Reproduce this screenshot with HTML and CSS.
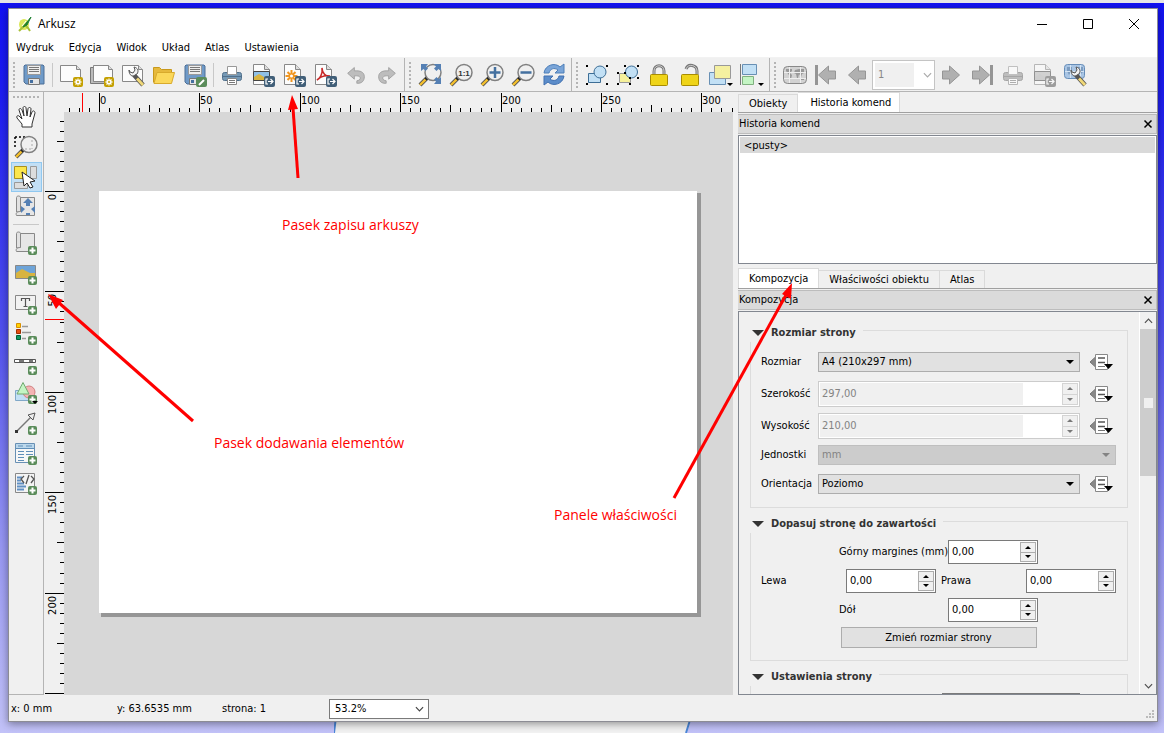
FILE: index.html
```html
<!DOCTYPE html>
<html lang="pl">
<head>
<meta charset="utf-8">
<title>Arkusz</title>
<link rel="stylesheet" href="styles.css">
</head>
<body>
<svg class="symbols" aria-hidden="true">
  <defs>
    <symbol id="b-plus" viewBox="0 0 9 9"><rect width="9" height="9" rx="2" fill="#5a8c5a"/><path d="M4.500 1.500v6M1.500 4.500h6" stroke="#fff" stroke-width="2"/></symbol>
    <symbol id="b-star" viewBox="0 0 10 10"><rect width="10" height="10" rx="2" fill="#c4a000"/><path d="M5 1.500v7M1.500 5h7M2.500 2.500l5 5M7.500 2.500l-5 5" stroke="#fff" stroke-width="1.300"/><circle cx="5" cy="5" r="1" fill="#c4a000"/></symbol>
    <symbol id="b-exp" viewBox="0 0 11 11"><rect width="11" height="11" rx="2" fill="#415f78"/><path d="M4 3H2v5h2M4 5.500h5M6.500 3L9 5.500 6.500 8" fill="none" stroke="#fff" stroke-width="1.200"/></symbol>
    <symbol id="lens" viewBox="0 0 24 24"><path d="M10 14l-8 8" stroke="#555" stroke-width="4"/><path d="M8 16l-6 6" stroke="#f5c02c" stroke-width="2.400"/><path d="M10.500 13.500l-3 3" stroke="#222" stroke-width="3"/><circle cx="15" cy="9.500" r="8" fill="#f0f0f0" stroke="#808080" stroke-width="1.500"/></symbol>
    <symbol id="i-save" viewBox="0 0 24 24"><path d="M3 2h18l1 1v18H4l-2-2V3z" fill="#6f9ac8" stroke="#4d6f96"/><path d="M5.500 2.500h13v9h-13z" fill="#eee" stroke="#999"/><path d="M7 4.500h10M7 6.500h10M7 8.500h10" stroke="#777"/><path d="M6.500 15.500h11v6h-11z" fill="#e4e4e4" stroke="#777"/><path d="M8 17h3v3H8z" fill="#456fa0"/></symbol>
    <symbol id="i-sheet" viewBox="0 0 24 24"><path d="M1.500 2.500h16l4 4v12h-20z" fill="#fcfcfc" stroke="#888"/><path d="M17.500 2.500v4h4" fill="#ddd" stroke="#888"/></symbol>
    <symbol id="i-new" viewBox="0 0 24 24"><use href="#i-sheet" width="24" height="24"/><use href="#b-star" x="14" y="14" width="10" height="10"/></symbol>
    <symbol id="i-copy" viewBox="0 0 24 24"><path d="M.5 4.500h3v14h16v2H.5z" fill="#bbb" stroke="#777"/><path d="M3.500 2.500h15l4 4v12h-19z" fill="#fcfcfc" stroke="#888"/><path d="M18.500 2.500v4h4" fill="#ddd" stroke="#888"/><use href="#b-star" x="14" y="14" width="10" height="10"/></symbol>
    <symbol id="wrench" viewBox="0 0 24 24"><path d="M13 12l9 10" stroke="#555" stroke-width="4.500"/><path d="M16 15.500l6 6.500" stroke="#f0d878" stroke-width="2.800"/><path d="M8 7c0 6 4 7 6 5l2-1c2-3 1-6-3-7l1 3-2 3-3-1z" fill="#f3f3f3" stroke="#555"/></symbol>
    <symbol id="i-manage" viewBox="0 0 24 24"><use href="#i-sheet" width="24" height="24"/><use href="#wrench" width="24" height="24"/></symbol>
    <symbol id="i-open" viewBox="0 0 24 24"><path d="M1.500 19.500V4.500h6l2 2h10v3" fill="#e6b93c" stroke="#c8991c"/><path d="M2 20.500L5 9.500h17.500l-3 11z" fill="#fbd85a" stroke="#d8aa2c"/></symbol>
    <symbol id="i-saveas" viewBox="0 0 24 24"><use href="#i-save" width="24" height="24"/><rect x="13" y="14" width="11" height="10" rx="2" fill="#5a8c5a"/><path d="M16 22l5-5" stroke="#fff" stroke-width="2"/></symbol>
    <symbol id="i-print" viewBox="0 0 24 24"><rect x="2.500" y="9.500" width="19" height="8" rx="2" fill="#7699b5" stroke="#50708c"/><path d="M7.500 11.500v-8h9v8z" fill="#fff" stroke="#999"/><path d="M2.500 13.500h19" stroke="#50708c"/><path d="M7.500 15.500h9v6h-9z" fill="#fff" stroke="#888"/><path d="M9 17.500h6M9 19.500h6" stroke="#777"/></symbol>
    <symbol id="i-doc" viewBox="0 0 24 24"><path d="M2.500 1.500h11l5 5v15h-16z" fill="#fcfcfc" stroke="#888"/><path d="M13.500 1.500v5h5" fill="#ddd" stroke="#888"/></symbol>
    <symbol id="i-image" viewBox="0 0 24 24"><use href="#i-doc" width="24" height="24"/><path d="M2.500 8.500h16v9h-16z" fill="#8fc0e6" stroke="#444"/><path d="M3 14l5-3 5 3h5v3H3z" fill="#d8b440"/><use href="#b-exp" x="13" y="13" width="11" height="11"/></symbol>
    <symbol id="i-svg" viewBox="0 0 24 24"><use href="#i-doc" width="24" height="24"/><path d="M9.500 7v12M3.500 13h12M5.500 9l8 8M13.500 9l-8 8" stroke="#f09620" stroke-width="2"/><circle cx="9.500" cy="13" r="1.500" fill="#fff"/><use href="#b-exp" x="13" y="13" width="11" height="11"/></symbol>
    <symbol id="i-pdf" viewBox="0 0 24 24"><use href="#i-doc" width="24" height="24"/><path d="M4 17c3-1 6-7 5-12 0 5 4 9 8 8-5-1-10 1-13 4z" fill="none" stroke="#c82828" stroke-width="1.600"/><use href="#b-exp" x="13" y="13" width="11" height="11"/></symbol>
    <symbol id="i-undo" viewBox="0 0 24 24"><path d="M2 10l8-7v4h3c6 0 9 3 9 7 0 5-3 8-8 8h-1v-3c6-1 5-6 0-6h-3v4z" fill="#bdbdbd" stroke="#9a9a9a"/></symbol>
    <symbol id="i-full" viewBox="0 0 24 24"><use href="#lens" width="24" height="24"/><path d="M3 1h7L8 3.500l2 2-2.500 2.500-2-2L3 8zM23 1h-7l2 2.500-2 2 2.500 2.500 2-2L23 8zM23 21h-7l2-2.500-2-2 2.500-2.500 2 2L23 14z" fill="#5580b4"/></symbol>
    <symbol id="i-one" viewBox="0 0 24 24"><use href="#lens" width="24" height="24"/><text x="15" y="13" class="one" text-anchor="middle">1:1</text></symbol>
    <symbol id="i-in" viewBox="0 0 24 24"><use href="#lens" width="24" height="24"/><path d="M15 4v11M9.500 9.500h11" stroke="#44709f" stroke-width="2.500"/></symbol>
    <symbol id="i-out" viewBox="0 0 24 24"><use href="#lens" width="24" height="24"/><path d="M9.500 9.500h11" stroke="#44709f" stroke-width="2.500"/></symbol>
    <symbol id="i-refresh" viewBox="0 0 24 24"><path d="M2 10C3 2 13-1 18 4l4-3v9h-9l3-3c-4-3-8-1-9 3z" fill="#7aa5d8" stroke="#4d7eb8"/><path d="M22 13c-1 8-11 11-16 6l-4 3v-9h9l-3 3c4 3 8 1 9-3z" fill="#5c8dca" stroke="#4070b0"/></symbol>
    <symbol id="i-group" viewBox="0 0 24 24"><path d="M3.500 10.500h12v9h-12z" fill="#c2e0f5" stroke="#3d6e96"/><circle cx="15" cy="9" r="6" fill="#c2e0f5" stroke="#3d6e96"/><path d="M1 2h2v2H1zM21 2h2v2h-2zM1 20h2v2H1zM21 20h2v2h-2z"/></symbol>
    <symbol id="i-ungroup" viewBox="0 0 24 24"><path d="M3.500 10.500h11v9h-11z" fill="#f5f09a" stroke="#999"/><circle cx="15.500" cy="9" r="6" fill="#c2e0f5" stroke="#3d6e96"/><path d="M1 9h2v2H1zM1 20h2v2H1zM13 20h2v2h-2zM8 2h2v2H8zM21 2h2v2h-2zM21 14h2v2h-2zM8 9h2v2H8zM13 14h2v2h-2z"/></symbol>
    <symbol id="i-lock" viewBox="0 0 24 24"><path d="M7 12V8c0-7 10-7 10 0v4" fill="none" stroke="#777" stroke-width="3"/><path d="M7 12V8c0-7 10-7 10 0v4" fill="none" stroke="#ccc"/><rect x="3.500" y="11.500" width="17" height="11" rx="1" fill="#efd418" stroke="#a88c00"/></symbol>
    <symbol id="i-unlock" viewBox="0 0 24 24"><path d="M8 6c2-6 11-4 11 2v4" fill="none" stroke="#777" stroke-width="3"/><path d="M8 6c2-6 11-4 11 2v4" fill="none" stroke="#ccc"/><rect x="3.500" y="11.500" width="17" height="11" rx="1" fill="#efd418" stroke="#a88c00"/></symbol>
    <symbol id="i-raise" viewBox="0 0 24 24"><path d="M.5 9.500h16v12H.5z" fill="#c2e0f5" stroke="#6890b4"/><path d="M5.500 2.500h16v13h-16z" fill="#f5f0a0" stroke="#999"/><path d="M18 20h6l-3 3z"/></symbol>
    <symbol id="i-align" viewBox="0 0 24 24"><path d="M.5 1v21" stroke="#777"/><path d="M2.500 1.500h14v10h-14z" fill="#c2e0f5" stroke="#6890b4"/><path d="M2.500 13.500h11v8h-11z" fill="#c4f5c4" stroke="#80b080"/><path d="M18 20h6l-3 3z"/></symbol>
    <symbol id="i-map" viewBox="0 0 24 24"><rect x=".5" y="3.500" width="23" height="17" rx="4" fill="#d2d2d2" stroke="#888"/><path d="M3 6h6v2L7 10l2 2-1 4H7l-1-4-3-4zM12 7l4-1h5v4l-2 1-1 3-2-3-1 4h-1l-1-4-2-1zM18 15h3v2h-3z" fill="#999"/><path d="M1 9.500h22M1 15.500h22M6.500 4v16M17.500 4v16" stroke="#eee"/></symbol>
    <symbol id="i-prev" viewBox="0 0 24 24"><path d="M3.500 12l10-9v5h7v8h-7v5z" fill="#b0b0b0" stroke="#959595"/></symbol>
    <symbol id="i-first" viewBox="0 0 24 24"><path d="M2.500 2v20" stroke="#959595" stroke-width="3"/><path d="M4.500 12l10-9v5h7v8h-7v5z" fill="#b0b0b0" stroke="#959595"/></symbol>
    <symbol id="i-atlas" viewBox="0 0 24 24"><rect x="1.500" y="1.500" width="20" height="14" rx="3" fill="#a9c5e4" stroke="#668db8"/><path d="M4 4h5v3l-3 5-2-4zM14 4h6v5l-3 3z" fill="#7c9cc0"/><path d="M2 8.500h19M7.500 2v13M17.500 2v13" stroke="#d4e4f4"/><use href="#wrench" width="24" height="24"/></symbol>
    <symbol id="i-hand" viewBox="0 0 24 24"><path d="M8 22v-3L3 13c-1-2 1-3 2-2l3 3L5 5c0-2 2-2 3 0l2 6L9 3c0-2 3-2 3 0l1 8 1-7c0-2 3-2 3 0l-1 8 2-5c1-2 3-1 3 1l-3 11v3z" fill="#fff" stroke="#333"/></symbol>
    <symbol id="i-zoom" viewBox="0 0 24 24"><path d="M1 2h12M1 2v11" stroke="#000" stroke-dasharray="2 2" stroke-width="1.500"/><use href="#lens" width="24" height="24"/><path d="M18 5v9M11 14h7" stroke="#aaa" stroke-dasharray="2 2"/></symbol>
    <symbol id="i-select" viewBox="0 0 24 24"><path d="M.5 1.500h12v12H.5z" fill="#fbe64c" stroke="#a89020"/><path d="M16.500 1.500h6v12h-6zM.5 17.500h13v6H.5z" fill="#ddd" stroke="#999"/><path d="M8 7l13 9-5 1 3 5-3 1-3-5-3 3z" fill="#fff" stroke="#222"/></symbol>
    <symbol id="i-scroll" viewBox="0 0 24 24"><path d="M2.500 2.500c0-2 4-2 4 0V17h-4z" fill="#e2e2e2" stroke="#888"/><path d="M6.500 2.500h14v18h-18c-1-2 0-4 4-4z" fill="#e6e6e6" stroke="#888"/></symbol>
    <symbol id="i-move" viewBox="0 0 24 24"><use href="#i-scroll" width="24" height="24"/><path d="M14 3l5 5h-3v3h-4V8H9zM7 11l4 3-4 4zM21 11l-4 3 4 4zM12 20v-2h4v2z" fill="#5580b4"/></symbol>
    <symbol id="i-addmap" viewBox="0 0 24 24"><use href="#i-scroll" width="24" height="24"/><use href="#b-plus" x="14" y="15" width="9" height="9"/></symbol>
    <symbol id="i-addimg" viewBox="0 0 24 24"><path d="M1.500 4.500h20v13h-20z" fill="#6ea4d8" stroke="#888"/><path d="M2 12l6-4 8 4h5v5H2z" fill="#d8b440"/><use href="#b-plus" x="14" y="15" width="9" height="9"/></symbol>
    <symbol id="i-addtext" viewBox="0 0 24 24"><path d="M1.500 4.500h20v14h-20z" fill="#f2f2f2" stroke="#888"/><path d="M7.500 10V7.500h8V10M11.500 7v9M9.500 15.500h4" fill="none" stroke="#555" stroke-width="1.200"/><use href="#b-plus" x="14" y="15" width="9" height="9"/></symbol>
    <symbol id="i-legend" viewBox="0 0 24 24"><path d="M2.500 2.500h4v4h-4z" fill="#ffd000" stroke="#d89000"/><path d="M2.500 8.500h4v4h-4z" fill="#e84c10" stroke="#a03000"/><path d="M2.500 14.500h4v4h-4z" fill="#109860" stroke="#006038"/><path d="M8 5.500h6M8 11.500h9M8 17.500h4" stroke="#999" stroke-width="1.500"/><use href="#b-plus" x="14" y="15" width="9" height="9"/></symbol>
    <symbol id="i-scale" viewBox="0 0 24 24"><path d="M.5 8.500h21v3H.5z" fill="#fff" stroke="#555"/><path d="M5 10h5M15 10h4" stroke="#777" stroke-width="2"/><use href="#b-plus" x="14" y="15" width="9" height="9"/></symbol>
    <symbol id="i-shape" viewBox="0 0 24 24"><path d="M1.500 9.500h14v10h-14z" fill="#c2e0f5" stroke="#80a8c8"/><circle cx="15" cy="11" r="6" fill="#f4b4b4" stroke="#d08080"/><path d="M9 1.500L15 13H3z" fill="#c4f5c4" stroke="#70a870"/><use href="#b-plus" x="14" y="14" width="9" height="9"/><path d="M18 20h6l-3 3z"/></symbol>
    <symbol id="i-arrow" viewBox="0 0 24 24"><path d="M3 20L17 6" stroke="#777" stroke-width="1.500"/><path d="M21 2l-2 7-5-5z" fill="#eee" stroke="#555"/><path d="M1 19h3v3H1z" fill="#333"/><use href="#b-plus" x="14" y="15" width="9" height="9"/></symbol>
    <symbol id="i-table" viewBox="0 0 24 24"><path d="M1.500 2.500h19v19h-19z" fill="#f7f7f7" stroke="#6890b4"/><path d="M2 3h18v4H2z" fill="#bcd8ec"/><path d="M2 7.500h18M4 5h5M12 5h6M4 10.500h6M12 10.500h7M4 13.500h6M12 13.500h7M4 16.500h6M4 19.500h6" stroke="#5f8eb8"/><use href="#b-plus" x="14" y="15" width="9" height="9"/></symbol>
    <symbol id="i-html" viewBox="0 0 24 24"><path d="M1.500 2.500h19v19h-19z" fill="#f4f4f4" stroke="#888"/><path d="M3 6.500h5M3 9.500h4M3 12.500h7M3 15.500h9M3 18.500h7" stroke="#6090c4" stroke-width="2"/><path d="M10 5L7 8l3 4M17 5l3 3-3 4M15 4l-3 9" fill="none" stroke="#555" stroke-width="1.300"/><use href="#b-plus" x="14" y="15" width="9" height="9"/></symbol>
    <symbol id="i-override" viewBox="0 0 24 20"><path d="M6.500 5v10L1 10z" fill="#888" stroke="#777"/><path d="M6.500 2.500h12v15h-12z" fill="#fff" stroke="#888"/><path d="M9 6h7M9 10.500h7" stroke="#555" stroke-width="1.500"/><path d="M9 14.500h7" stroke="#777"/><path d="M15 12h9l-4.500 5z"/></symbol>
    <symbol id="i-x" viewBox="0 0 10 10"><path d="M1.500 1.500l7 7M8.500 1.500l-7 7" stroke="#000" stroke-width="1.500"/></symbol>
    <symbol id="i-up" viewBox="0 0 6 3"><path d="M3 0l3 3H0z" fill="currentColor"/></symbol>
    <symbol id="i-down" viewBox="0 0 6 3"><path d="M0 0h6L3 3z" fill="currentColor"/></symbol>
    <symbol id="i-chev" viewBox="0 0 10 6"><path d="M1 1l4 4 4-4" fill="none" stroke="currentColor" stroke-width="1.300"/></symbol>
  </defs>
</svg>

<div class="desktop">
  <svg class="sheet-behind" viewBox="0 0 357 16" aria-hidden="true"><path d="M2 0h356l-5 16H0z" fill="#f2f2f2"/><path d="M2 0L0 16M357 0l-5 16" stroke="#4a86d8" stroke-width="2"/></svg>
  <main class="window">
    <header class="titlebar">
      <svg class="logo" viewBox="0 0 16 16" aria-hidden="true"><ellipse cx="7" cy="8.500" rx="5" ry="5.500" fill="#dce85a"/><path d="M2 15L8 9l3 3 2 3" fill="none" stroke="#a8c038" stroke-width="2"/><path d="M6 11L14 1l-4 8z" fill="#1d8030" stroke="#1d8030"/><path d="M5 10l4-5" stroke="#fff"/></svg>
      <h1 class="caption">Arkusz</h1>
      <button class="win-btn" aria-label="Minimalizuj"><svg viewBox="0 0 12 12"><path d="M1 6.500h10" stroke="#000"/></svg></button>
      <button class="win-btn" aria-label="Maksymalizuj"><svg viewBox="0 0 12 12"><path d="M1.500 1.500h9v9h-9z" fill="none" stroke="#000"/></svg></button>
      <button class="win-btn" aria-label="Zamknij"><svg viewBox="0 0 12 12"><path d="M1 1l10 10M11 1L1 11" stroke="#000"/></svg></button>
    </header>
    <nav class="menubar">
      <button>Wydruk</button><button>Edycja</button><button>Widok</button><button>Układ</button><button>Atlas</button><button>Ustawienia</button>
    </nav>
    <div class="toolbar">
      <div class="group">
        <span class="grip"></span>
        <button class="tool" aria-label="Zapisz"><svg><use href="#i-save"/></svg></button>
        <span class="sep"></span>
        <button class="tool" aria-label="Nowy"><svg><use href="#i-new"/></svg></button>
        <button class="tool" aria-label="Powiel"><svg><use href="#i-copy"/></svg></button>
        <button class="tool" aria-label="Menedżer"><svg><use href="#i-manage"/></svg></button>
        <button class="tool" aria-label="Otwórz"><svg><use href="#i-open"/></svg></button>
        <button class="tool" aria-label="Zapisz szablon"><svg><use href="#i-saveas"/></svg></button>
        <span class="sep"></span>
        <button class="tool" aria-label="Drukuj"><svg><use href="#i-print"/></svg></button>
        <button class="tool" aria-label="Eksport obrazu"><svg><use href="#i-image"/></svg></button>
        <button class="tool" aria-label="Eksport SVG"><svg><use href="#i-svg"/></svg></button>
        <button class="tool" aria-label="Eksport PDF"><svg><use href="#i-pdf"/></svg></button>
        <button class="tool" aria-label="Cofnij" disabled><svg class="small"><use href="#i-undo"/></svg></button>
        <button class="tool" aria-label="Ponów" disabled><svg class="small flip"><use href="#i-undo"/></svg></button>
      </div>
      <div class="group">
        <span class="grip"></span>
        <button class="tool" aria-label="Pełny zasięg"><svg><use href="#i-full"/></svg></button>
        <button class="tool" aria-label="Skala 1:1"><svg><use href="#i-one"/></svg></button>
        <button class="tool" aria-label="Powiększ"><svg><use href="#i-in"/></svg></button>
        <button class="tool" aria-label="Pomniejsz"><svg><use href="#i-out"/></svg></button>
        <button class="tool" aria-label="Odśwież"><svg><use href="#i-refresh"/></svg></button>
      </div>
      <div class="group">
        <span class="grip"></span>
        <button class="tool" aria-label="Grupuj"><svg><use href="#i-group"/></svg></button>
        <button class="tool" aria-label="Rozgrupuj"><svg><use href="#i-ungroup"/></svg></button>
        <button class="tool" aria-label="Zablokuj"><svg><use href="#i-lock"/></svg></button>
        <button class="tool" aria-label="Odblokuj"><svg><use href="#i-unlock"/></svg></button>
        <button class="tool" aria-label="Przenieś wyżej"><svg><use href="#i-raise"/></svg></button>
        <button class="tool" aria-label="Wyrównaj"><svg><use href="#i-align"/></svg></button>
      </div>
      <div class="group last">
        <span class="grip"></span>
        <button class="tool" aria-label="Podgląd atlasu" disabled><svg><use href="#i-map"/></svg></button>
        <button class="tool" aria-label="Pierwszy" disabled><svg><use href="#i-first"/></svg></button>
        <button class="tool" aria-label="Poprzedni" disabled><svg><use href="#i-prev"/></svg></button>
        <span class="page-box"><input aria-label="Strona atlasu" value="1" disabled><svg class="chev"><use href="#i-chev"/></svg></span>
        <button class="tool" aria-label="Następny" disabled><svg class="flip"><use href="#i-prev"/></svg></button>
        <button class="tool" aria-label="Ostatni" disabled><svg class="flip"><use href="#i-first"/></svg></button>
        <button class="tool gray" aria-label="Drukuj atlas" disabled><svg><use href="#i-print"/></svg></button>
        <button class="tool gray" aria-label="Eksport atlasu" disabled><svg><use href="#i-image"/></svg></button>
        <button class="tool" aria-label="Ustawienia atlasu"><svg><use href="#i-atlas"/></svg></button>
      </div>
    </div>

    <div class="workspace">
      <div class="sidebar">
        <span class="grip-h"></span>
        <button class="side" aria-label="Przesuń"><svg><use href="#i-hand"/></svg></button>
        <button class="side" aria-label="Lupa"><svg><use href="#i-zoom"/></svg></button>
        <button class="side active" aria-label="Wybierz"><svg><use href="#i-select"/></svg></button>
        <button class="side" aria-label="Przesuń zawartość"><svg><use href="#i-move"/></svg></button>
        <span class="sep-h"></span>
        <button class="side" aria-label="Dodaj mapę"><svg><use href="#i-addmap"/></svg></button>
        <button class="side" aria-label="Dodaj obraz"><svg><use href="#i-addimg"/></svg></button>
        <button class="side" aria-label="Dodaj etykietę"><svg><use href="#i-addtext"/></svg></button>
        <button class="side" aria-label="Dodaj legendę"><svg><use href="#i-legend"/></svg></button>
        <button class="side" aria-label="Dodaj podziałkę"><svg><use href="#i-scale"/></svg></button>
        <button class="side" aria-label="Dodaj kształt"><svg><use href="#i-shape"/></svg></button>
        <button class="side" aria-label="Dodaj strzałkę"><svg><use href="#i-arrow"/></svg></button>
        <button class="side" aria-label="Dodaj tabelę"><svg><use href="#i-table"/></svg></button>
        <button class="side" aria-label="Dodaj HTML"><svg><use href="#i-html"/></svg></button>
      </div>

      <div class="view">
        <svg class="ruler-h" id="ruler-h" aria-hidden="true"></svg>
        <svg class="ruler-v" id="ruler-v" aria-hidden="true"></svg>
        <div class="canvas"><div class="paper"></div></div>
      </div>

      <aside class="docks">
        <div class="tabs">
          <button class="tab">Obiekty</button><button class="tab on wide">Historia komend</button>
        </div>
        <div class="dock-title"><h2>Historia komend</h2><button aria-label="Zamknij panel"><svg><use href="#i-x"/></svg></button></div>
        <ul class="history"><li>&lt;pusty&gt;</li></ul>
        <div class="tabs second">
          <button class="tab on">Kompozycja</button><button class="tab">Właściwości obiektu</button><button class="tab">Atlas</button>
        </div>
        <div class="dock-title"><h2>Kompozycja</h2><button aria-label="Zamknij panel"><svg><use href="#i-x"/></svg></button></div>
        <div class="scroll">
          <form class="props">
            <section>
              <div class="head"><svg class="tri"><use href="#i-down"/></svg><h3>Rozmiar strony</h3><span class="rule"></span></div>
              <div class="box size">
                <label for="f-size">Rozmiar</label>
                <span class="combo"><select id="f-size"><option>A4 (210x297 mm)</option></select><svg><use href="#i-down"/></svg></span>
                <button type="button" class="over" aria-label="Zdefiniuj rozmiar"><svg><use href="#i-override"/></svg></button>
                <label for="f-w">Szerokość</label>
                <span class="spin off"><input id="f-w" value="297,00" disabled><span class="steps"><button type="button" aria-label="Więcej" disabled><svg><use href="#i-up"/></svg></button><button type="button" aria-label="Mniej" disabled><svg><use href="#i-down"/></svg></button></span></span>
                <button type="button" class="over" aria-label="Zdefiniuj szerokość"><svg><use href="#i-override"/></svg></button>
                <label for="f-h">Wysokość</label>
                <span class="spin off"><input id="f-h" value="210,00" disabled><span class="steps"><button type="button" aria-label="Więcej" disabled><svg><use href="#i-up"/></svg></button><button type="button" aria-label="Mniej" disabled><svg><use href="#i-down"/></svg></button></span></span>
                <button type="button" class="over" aria-label="Zdefiniuj wysokość"><svg><use href="#i-override"/></svg></button>
                <label for="f-u">Jednostki</label>
                <span class="combo off"><select id="f-u" disabled><option>mm</option></select><svg><use href="#i-down"/></svg></span>
                <label for="f-o">Orientacja</label>
                <span class="combo"><select id="f-o"><option>Poziomo</option></select><svg><use href="#i-down"/></svg></span>
                <button type="button" class="over" aria-label="Zdefiniuj orientację"><svg><use href="#i-override"/></svg></button>
              </div>
            </section>
            <section>
              <div class="head"><svg class="tri"><use href="#i-down"/></svg><h3>Dopasuj stronę do zawartości</h3><span class="rule"></span></div>
              <div class="box margins">
                <div class="line center"><label for="m-t">Górny margines (mm)</label><span class="spin"><input id="m-t" value="0,00"><span class="steps"><button type="button" aria-label="Więcej"><svg><use href="#i-up"/></svg></button><button type="button" aria-label="Mniej"><svg><use href="#i-down"/></svg></button></span></span></div>
                <div class="line"><label for="m-l">Lewa</label><span class="spin"><input id="m-l" value="0,00"><span class="steps"><button type="button" aria-label="Więcej"><svg><use href="#i-up"/></svg></button><button type="button" aria-label="Mniej"><svg><use href="#i-down"/></svg></button></span></span><label class="next" for="m-r">Prawa</label><span class="spin"><input id="m-r" value="0,00"><span class="steps"><button type="button" aria-label="Więcej"><svg><use href="#i-up"/></svg></button><button type="button" aria-label="Mniej"><svg><use href="#i-down"/></svg></button></span></span></div>
                <div class="line center"><label for="m-b">Dół</label><span class="spin"><input id="m-b" value="0,00"><span class="steps"><button type="button" aria-label="Więcej"><svg><use href="#i-up"/></svg></button><button type="button" aria-label="Mniej"><svg><use href="#i-down"/></svg></button></span></span></div>
                <button type="button" class="push">Zmień rozmiar strony</button>
              </div>
            </section>
            <section>
              <div class="head"><svg class="tri"><use href="#i-down"/></svg><h3>Ustawienia strony</h3><span class="rule"></span></div>
              <div class="box pages"><span class="spin"><input aria-label="Liczba stron"></span></div>
            </section>
          </form>
          <div class="bar">
            <button aria-label="Przewiń w górę"><svg class="flip-v"><use href="#i-chev"/></svg></button>
            <div class="thumb"></div>
            <button class="end" aria-label="Przewiń w dół"><svg><use href="#i-chev"/></svg></button>
          </div>
        </div>
      </aside>
    </div>

    <footer class="status">
      <span class="cx">x: 0 mm</span><span class="cy">y: 63.6535 mm</span><span class="pg">strona: 1</span>
      <span class="zoom"><select aria-label="Powiększenie"><option>53.2%</option></select><svg><use href="#i-chev"/></svg></span>
      <svg class="size-grip" viewBox="0 0 9 9" aria-hidden="true"><path d="M6 0h2v2H6zM3 3h2v2H3zM6 3h2v2H6zM0 6h2v2H0zM3 6h2v2H3zM6 6h2v2H6z" fill="#bbb"/></svg>
    </footer>
  </main>

  <svg class="notes" aria-hidden="true">
    <g stroke="#f00" stroke-width="3" fill="#f00">
      <path d="M298 178L293 108"/><path d="M193 421L58 302"/><path d="M674 498L786 295"/>
    </g>
    <path d="M292 95l6 14-10 1zM48 294l15 6-7 9zM792 283l-1 16-9-5z" fill="#f00"/>
  </svg>
  <p class="note n1">Pasek zapisu arkuszy</p>
  <p class="note n2">Pasek dodawania elementów</p>
  <p class="note n3">Panele właściwości</p>
</div>
<script src="rulers.js"></script>
</body>
</html>
```
FILE: styles.css
```css
* { box-sizing: border-box; }
body { margin: 0; font: 11px/14px "DejaVu Sans Condensed", "Noto Sans", sans-serif; color: #000; }
h1, h2, h3, p, ul { margin: 0; padding: 0; font: inherit; list-style: none; }
button, input, select { font: inherit; color: inherit; margin: 0; padding: 0; border: 0; background: none; }
button { display: flex; align-items: center; justify-content: center; }
input, select { width: 100%; min-width: 0; appearance: none; outline: 0; }
svg { display: block; flex: none; }
.symbols { position: absolute; width: 0; height: 0; }
.one { font: bold 8px "Liberation Sans", sans-serif; fill: #333; }

.desktop {
  position: relative; height: 100vh; overflow: hidden; padding: 5px 6px 11px 8px;
  display: flex; border-top: 3px solid #e6e6e6;
  background: linear-gradient(#1212f4 0, #1c1cf2 12%, #5050ee 45%, #9898f2 75%, #c2c2f8 100%);
}
.sheet-behind { position: absolute; left: 334px; bottom: 0; width: 357px; height: 16px; }
.window {
  position: relative; flex: 1; min-width: 0; display: flex; flex-direction: column;
  border: 1px solid #8c8c94; background: #f0f0f0; box-shadow: 0 2px 8px #0006;
}

.titlebar { height: 29px; display: flex; align-items: center; background: #fff; padding-left: 8px; }
.logo { width: 16px; height: 16px; }
.caption { flex: 1; padding-left: 5px; font: 12px/16px "Open Sans", sans-serif; }
.win-btn { width: 46px; height: 28px; }
.win-btn svg { width: 12px; height: 12px; }
.menubar { display: flex; height: 20px; gap: 15px; padding-left: 7px; background: #fff; border-bottom: 1px solid #f2f2f2; }

.toolbar { display: flex; height: 34px; border-bottom: 1px solid #b4b4b4; }
.group { display: flex; align-items: center; padding-right: 2px; border-right: 1px solid #b4b4b4; }
.group.last { border: 0; }
.grip { width: 9px; height: 26px; background: repeating-linear-gradient(#b4b4b4 0 2px, #f0f0f0 2px 4px) 4px 0 / 2px 26px no-repeat; }
.sep { width: 6px; height: 24px; background: linear-gradient(#c8c8c8, #c8c8c8) 3px 0 / 1px 24px no-repeat; }
.tool { width: 31px; height: 30px; }
.tool svg, .side svg { width: 24px; height: 24px; }
.tool .small { width: 20px; height: 20px; }
.tool .flip { transform: scaleX(-1); }
.gray svg { filter: grayscale(1); opacity: .55; }
.page-box { display: flex; align-items: center; gap: 9px; width: 63px; height: 30px; padding: 2px; border: 1px solid #c4c4c4; background: #fff; color: #888; }
.page-box input { width: 41px; height: 24px; padding-left: 3px; background: #f0f0f0; }
.chev { width: 9px; height: 6px; color: #aaa; }

.workspace { flex: 1; min-height: 0; display: flex; }
.sidebar { width: 35px; display: flex; flex-direction: column; align-items: center; border-right: 1px solid #b4b4b4; border-bottom: 1px solid #b4b4b4; }
.grip-h { width: 26px; height: 10px; background: repeating-linear-gradient(90deg, #b4b4b4 0 2px, #f0f0f0 2px 4px) 0 4px / 26px 2px no-repeat; }
.sep-h { width: 26px; height: 6px; background: linear-gradient(#c8c8c8, #c8c8c8) 0 2px / 26px 1px no-repeat; }
.side { width: 31px; height: 30px; }
.side.active { background: #c2dff5; border: 1px solid #90c8f0; }

.view { flex: 1; min-width: 0; display: grid; grid-template: 20px 1fr / 20px 1fr; }
.ruler-h { grid-column: 1 / 3; width: 100%; height: 20px; overflow: hidden; }
.ruler-v { width: 20px; height: 100%; min-height: 0; overflow: hidden; }
.view text { font: 11px "DejaVu Sans Condensed", sans-serif; }
.canvas { position: relative; overflow: hidden; background: #d7d7d7; }
.paper { position: absolute; left: 35px; top: 79px; width: 598px; height: 422px; background: #fff; box-shadow: 3px 3px 0 1px #969696; }

.docks { width: 424px; padding-left: 5px; display: flex; flex-direction: column; }
.tabs { display: flex; align-items: flex-end; height: 21px; border-bottom: 1px solid #a0a0a0; }
.tabs.second { height: 20px; margin-top: 5px; }
.tab { height: 18px; padding: 0 10px; border: 1px solid #dadada; border-bottom: 0; background: #f0f0f0; white-space: nowrap; }
.tab + .tab { border-left: 0; }
.tab.on { height: 20px; background: #fff; }
.tab.wide { padding: 0 8px 0 12px; }
.dock-title { display: flex; align-items: center; justify-content: space-between; height: 20px; margin: 1px 0; padding: 0 3px 0 1px; border: 1px solid #bcbcbc; border-left: 0; background: #dadada; }
.dock-title svg { width: 10px; height: 10px; }
.history { height: 129px; padding: 1px; border: 1px solid #828790; background: #fff; }
.history li { height: 16px; padding-left: 4px; line-height: 17px; background: #d9d9d9; }

.scroll { flex: 1; min-height: 0; display: flex; border: 1px solid #828790; overflow: hidden; }
.props { flex: 1; min-width: 0; overflow: hidden; padding: 12px 11px 0 11px; }
.props section { margin-bottom: 7px; }
.head { display: flex; align-items: center; height: 18px; }
.tri { width: 12px; height: 6px; margin: 0 7px 0 2px; color: #333; }
.head h3 { font-weight: bold; color: #333; padding-right: 7px; }
.rule { flex: 1; align-self: flex-end; height: 12px; border: 1px solid #dcdcdc; border-width: 1px 1px 0 0; }
.box { border: 1px solid #dcdcdc; border-top: 0; }
.size { display: grid; grid-template: 26px 26px 26px 20px 26px / 57px 1fr 36px; row-gap: 6px; align-items: center; padding: 7px 11px 10px 10px; }
.combo { position: relative; height: 20px; border: 1px solid #adadad; background: #e1e1e1; }
.combo select { height: 18px; padding-left: 3px; }
.combo svg { position: absolute; right: 5px; top: 7px; width: 8px; height: 4px; pointer-events: none; }
.combo.off { grid-column: 2 / 4; background: #ccc; border-color: #bfbfbf; color: #838383; }
.combo.off select, .spin.off input { opacity: 1; color: #838383; }
.over { justify-content: flex-start; padding-left: 9px; }
.over svg { width: 24px; height: 20px; }
.spin { display: flex; width: 90px; height: 24px; padding: 1px; border: 1px solid #7a7a7a; background: #fff; }
.spin input { flex: 1; padding-left: 2px; }
.steps { display: flex; flex-direction: column; width: 16px; }
.steps button { flex: 1; min-height: 0; border: 1px solid #adadad; background: #f0f0f0; }
.steps button + button { border-top: 0; }
.steps svg { width: 6px; height: 3px; }
.spin.off { width: 100%; height: 26px; border-color: #ccc; }
.spin.off input { margin-right: 39px; background: #f0f0f0; }
.spin.off .steps { color: #777; }
.spin.off .steps button { border-color: #d4d4d4; }

.margins { display: flex; flex-direction: column; gap: 5px; padding: 7px 11px 12px 10px; }
.line { display: flex; align-items: center; }
.line label { flex: 1; }
.line .next { margin-left: 5px; }
.line.center { justify-content: center; }
.line.center label { flex: 0 0 109px; white-space: nowrap; }
.push { align-self: center; width: 196px; height: 21px; border: 1px solid #adadad; background: #e1e1e1; }
.pages { display: flex; justify-content: flex-end; padding: 7px 47px 10px 10px; }
.pages .spin { width: 138px; }

.bar { width: 17px; display: flex; flex-direction: column; border-left: 1px solid #fff; color: #505050; }
.bar button { width: 16px; height: 17px; }
.bar .end { margin-top: auto; }
.bar svg { width: 9px; height: 6px; }
.flip-v { transform: scaleY(-1); }
.thumb { display: flex; height: 147px; background: #cdcdcd; }
.thumb::before { content: ""; width: 9px; height: 10px; margin: auto; background: #f0f0f0; }

.status { display: flex; align-items: center; height: 26px; padding: 2px 0 0 2px; }
.cx { width: 106px; }
.cy { width: 105px; }
.pg { width: 107px; }
.zoom { position: relative; width: 100px; height: 20px; border: 1px solid #7a7a7a; background: #fff; }
.zoom select { height: 18px; padding-left: 5px; }
.zoom svg { position: absolute; right: 4px; top: 6px; width: 9px; height: 6px; color: #444; pointer-events: none; }
.size-grip { width: 9px; height: 9px; margin: auto 2px 2px auto; }

.notes { position: absolute; left: 0; top: -3px; width: 100%; height: 100vh; pointer-events: none; }
.note { position: absolute; font: 14px/18px "Open Sans", sans-serif; color: #f00; white-space: nowrap; }
.n1 { left: 282px; top: 213px; }
.n2 { left: 214px; top: 431px; }
.n3 { left: 554px; top: 503px; }
```
FILE: rulers.js
```js
// Draws the millimetre rulers: a tick each 5 mm, a longer one each 25 mm, a label each 50 mm.
const STEP = 10.04;

function marks(origin, first, length, vertical) {
  let out = '';
  for (let i = first; origin + i * STEP < length; i++) {
    const p = Math.round(origin + i * STEP);
    const size = i % 10 === 0 ? 19 : i % 5 === 0 ? 7 : 4;
    out += vertical
      ? `<rect x="${20 - size}" y="${p}" width="${size}" height="1"/>`
      : `<rect x="${p}" y="${20 - size}" width="1" height="${size}"/>`;
    if (i % 10 === 0 && p + 24 < length) {
      out += vertical
        ? `<text transform="translate(12 ${p + 3}) rotate(-90)" text-anchor="end">${i * 5}</text>`
        : `<text x="${p + 1}" y="12">${i * 5}</text>`;
    }
  }
  return out;
}

function draw() {
  const h = document.getElementById('ruler-h');
  const v = document.getElementById('ruler-v');
  h.innerHTML = marks(55, -3, h.getBoundingClientRect().width, false)
    + '<rect x="38" y="1" width="1" height="19" fill="#f00"/>';
  v.innerHTML = marks(79, -7, v.getBoundingClientRect().height, true)
    + '<rect x="1" y="207" width="19" height="1" fill="#f00"/>';
}

draw();
window.addEventListener('resize', draw);
```
